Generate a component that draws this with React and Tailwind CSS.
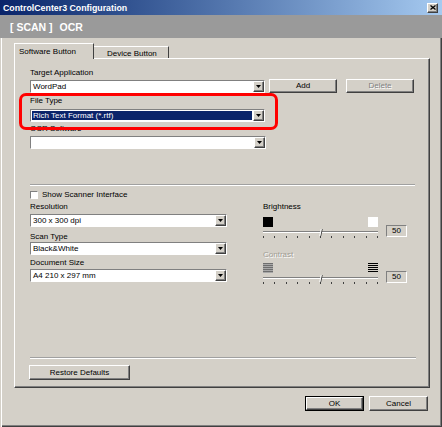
const raised =
  'border border-t-white border-l-white border-r-[#404040] border-b-[#404040] shadow-[inset_-1px_-1px_0_#808080]';
const sunken = 'border border-t-[#808080] border-l-[#808080] border-r-white border-b-white';

function Arrow() {
  return (
    <div className={`flex h-full w-[11px] shrink-0 items-center justify-center bg-[#d4d0c8] ${raised}`}>
      <svg width="5" height="3" viewBox="0 0 5 3">
        <path d="M0 0h5L2.5 3z" fill="#000" />
      </svg>
    </div>
  );
}

function Combo({ value, selected, className = '' }) {
  return (
    <div className={`flex h-[13px] bg-white ${sunken} ${className}`}>
      <div className="flex flex-1 p-[1px]">
        <div
          className={`flex flex-1 items-center overflow-hidden whitespace-nowrap pl-[1px] ${
            selected ? 'bg-[#0a246a] text-white' : ''
          }`}
        >
          {value}
        </div>
      </div>
      <Arrow />
    </div>
  );
}

function Button({ children, className = '', disabled }) {
  return (
    <div className={`flex h-[15px] items-center justify-center bg-[#d4d0c8] ${raised} ${className}`}>
      <span className={disabled ? 'text-[#808080] [text-shadow:1px_1px_0_#fff]' : ''}>{children}</span>
    </div>
  );
}

function Label({ children, className = '' }) {
  return <div className={`h-[10px] whitespace-nowrap ${className}`}>{children}</div>;
}

function Slider({ left, right }) {
  return (
    <div className="flex items-start">
      <div className="w-[115px]">
        <div className="flex h-[10px] justify-between">
          {left}
          {right}
        </div>
        <div className="relative mt-[4px] h-[2px] border-t border-t-[#808080] border-b border-b-white">
          <div className="absolute left-[57px] top-[-3px] h-[7px] w-[2px] skew-x-[-12deg] border-l border-l-white border-r border-r-[#404040]" />
        </div>
        <div className="mt-[3px] flex h-[2px] justify-between">
          {Array.from({ length: 11 }).map((_, i) => (
            <div key={i} className="h-[2px] w-[1px] bg-[#404040]" />
          ))}
        </div>
      </div>
      <div className={`ml-[8px] mt-[8px] flex h-[12px] w-[21px] items-center justify-center ${sunken}`}>50</div>
    </div>
  );
}

function Stripes({ color, gap }) {
  return (
    <svg width="10" height="10" viewBox="0 0 10 10">
      {[0, 2, 4, 6, 8].map((y) => (
        <rect key={y} x="0" y={y} width="10" height={gap ? 1 : 2} fill={color} />
      ))}
      {!gap && [1, 3, 5, 7, 9].map((y) => <rect key={'b' + y} x="0" y={y} width="10" height="1" fill="#a8a8a8" />)}
    </svg>
  );
}

export default function App() {
  return (
    <div className="flex h-[427px] w-[442px] flex-col bg-[#d4d0c8] font-['Liberation_Sans',Arial,sans-serif] text-[8px] leading-[10px] text-black shadow-[inset_1px_0_0_#d4d0c8,inset_2px_0_0_#ffffff,inset_-1px_-1px_0_#404040,inset_-2px_-2px_0_#808080]">
      {/* Title bar */}
      <div className="flex h-[15px] shrink-0 items-center justify-between bg-gradient-to-r from-[#0a246a] to-[#a6caf0] pl-[3px] pr-[4px]">
        <span className="text-[8.8px] font-bold text-white">ControlCenter3 Configuration</span>
        <div className={`flex h-[10px] w-[11px] items-center justify-center bg-[#d4d0c8] ${raised}`}>
          <svg width="6" height="5" viewBox="0 0 6 5">
            <path d="M0.5 0.5l5 4M5.5 0.5l-5 4" stroke="#000" strokeWidth="1.3" />
          </svg>
        </div>
      </div>

      {/* Mode band */}
      <div className="flex h-[23px] shrink-0 items-center bg-[#9a9a9a] pl-[10px] text-[10.5px] font-bold text-white">
        <span>[ SCAN ]</span>
        <span className="ml-[7px]">OCR</span>
      </div>

      {/* Tabs */}
      <div className="relative z-10 ml-[14px] mt-[5px] flex h-[16px] items-end">
        <div className="h-[16px] w-[80px] border-l border-t border-l-white border-t-white border-r border-r-[#404040] bg-[#d4d0c8] pl-[4px] pt-[3px]">
          Software Button
        </div>
        <div className="mb-[1px] h-[12px] w-[75px] border-t border-t-white border-r border-r-[#404040] bg-[#d4d0c8] pl-[13px] pt-[2px]">
          Device Button
        </div>
      </div>

      {/* Panel */}
      <div className="relative -mt-[1px] ml-[14px] flex h-[330px] w-[416px] flex-col border border-l-white border-t-white border-r-[#404040] border-b-[#404040] pl-[15px] pt-[9px] shadow-[inset_-1px_-1px_0_#808080]">
        <Label>Target Application</Label>
        <div className="mt-[1px] flex items-start">
          <Combo value="WordPad" className="mt-[1px] w-[235px]" />
          <Button className="ml-[4px] w-[68px] !h-[14px]">Add</Button>
          <Button className="ml-[9px] w-[68px] !h-[14px]" disabled>
            Delete
          </Button>
        </div>
        <Label className="mt-[3px]">File Type</Label>
        <Combo value="Rich Text Format (*.rtf)" selected className="mt-[3px] w-[235px]" />
        <Label className="mt-[2px]">OCR Software</Label>
        <Combo value="" className="mt-[2px] w-[236px]" />

        <div className="mt-[35px] h-[2px] w-[385px] border-t border-t-[#a0a0a0] border-b border-b-white" />

        <div className="mt-[4px] flex h-[10px] items-center">
          <div className={`h-[8px] w-[8px] bg-white ${sunken}`} />
          <span className="ml-[4px]">Show Scanner Interface</span>
        </div>

        <div className="flex">
          <div className="w-[197px]">
            <Label className="mt-[2px]">Resolution</Label>
            <Combo value="300 x 300 dpi" className="mt-[2px]" />
            <Label className="mt-[5px]">Scan Type</Label>
            <Combo value="Black&White" />
            <Label className="mt-[3px]">Document Size</Label>
            <Combo value="A4 210 x 297 mm" className="mt-[1px]" />
          </div>
          <div className="ml-[36px]">
            <Label className="mt-[2px]">Brightness</Label>
            <div className="mt-[5px]">
              <Slider
                left={<div className="h-[10px] w-[10px] bg-black" />}
                right={<div className="h-[10px] w-[10px] bg-white" />}
              />
            </div>
            <Label className="mt-[12px] text-[#a09c94] [text-shadow:1px_1px_0_#fff]">Contrast</Label>
            <div className="mt-[3px]">
              <Slider left={<Stripes color="#6e6e6e" />} right={<Stripes color="#000" gap />} />
            </div>
          </div>
        </div>

        <div className="mt-auto pb-[7px]">
          <div className="h-[2px] w-[386px] border-t border-t-[#a0a0a0] border-b border-b-white" />
          <Button className="mt-[6px] w-[101px] -ml-[1px]">Restore Defaults</Button>
        </div>

        {/* annotation highlight */}
        <div className="absolute left-[4px] top-[34px] h-[37px] w-[259px] rounded-[7px] border-[3px] border-[#ff0000]" />
      </div>

      {/* Dialog buttons */}
      <div className="mt-[8px] flex justify-end pr-[14px]">
        <div className="h-[15px] w-[59px] border border-black">
          <Button className="!h-[13px] w-full">OK</Button>
        </div>
        <Button className="ml-[5px] w-[59px]">Cancel</Button>
      </div>
    </div>
  );
}
